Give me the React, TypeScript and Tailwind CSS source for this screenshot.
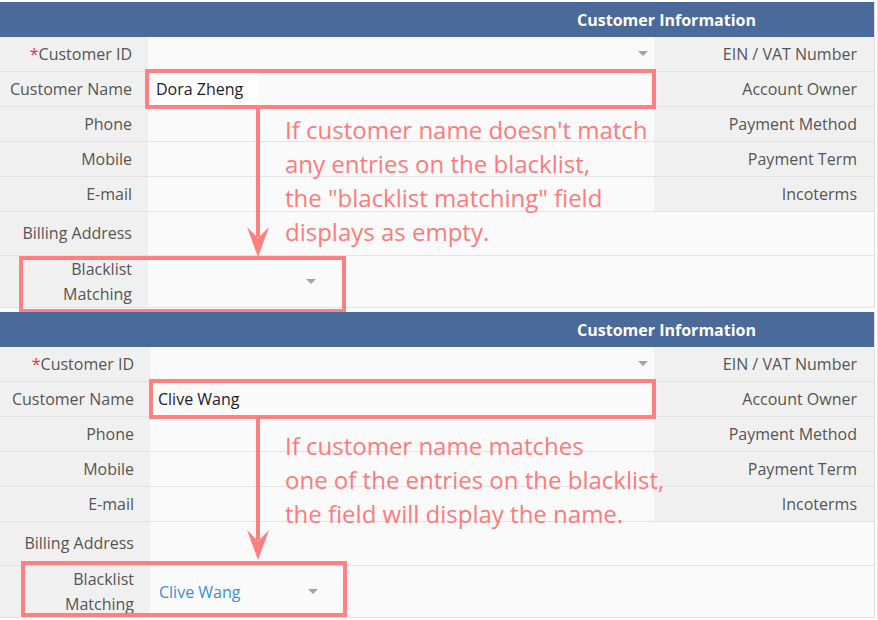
import type { ReactNode } from 'react';

const FONT = { fontFamily: '"Open Sans", "Noto Sans", sans-serif' };

function Caret() {
  return (
    <svg width="10" height="6" viewBox="0 0 10 6" className="shrink-0">
      <path d="M0 0 L10 0 L5 5 Z" fill="#a3a3a3" />
    </svg>
  );
}

function ArrowDown({ left, top, length }: { left: number; top: number; length: number }) {
  return (
    <svg
      className="absolute"
      style={{ left, top }}
      width="24"
      height={length}
      viewBox={`0 0 24 ${length}`}
    >
      <rect x="10" y="0" width="4" height={length - 20} fill="#ff7f7f" />
      <path d={`M12 ${length} L1 ${length - 30} L12 ${length - 19} L23 ${length - 30} Z`} fill="#ff7f7f" />
    </svg>
  );
}

function Row({
  label,
  right,
  labelW,
  children,
  tall,
}: {
  label: ReactNode;
  right?: string;
  labelW: number;
  children?: ReactNode;
  tall?: string;
}) {
  return (
    <div className={`flex border-b border-[#e3e3e3] ${tall ?? 'h-[35px]'}`}>
      <div
        className="flex shrink-0 items-center justify-end bg-[#f0f0f0] pr-4 text-right text-[16px] leading-[25px] text-[#555]"
        style={{ width: labelW }}
      >
        {label}
      </div>
      <div className="flex flex-1 items-center bg-[#fafafa]">{children}</div>
      {right && (
        <div className="flex w-[220px] shrink-0 items-center justify-end bg-[#f0f0f0] pr-[17px] text-[16px] text-[#555]">
          {right}
        </div>
      )}
    </div>
  );
}

function Panel({
  labelW,
  name,
  nameBg,
  matched,
  note,
  noteTop,
  boxes,
}: {
  labelW: number;
  name: string;
  nameBg?: boolean;
  matched?: string;
  note: string[];
  noteTop: number;
  boxes: { name: [number, number, number, number]; black: [number, number, number, number]; arrow: [number, number, number] };
}) {
  const [nl, nt, nw, nh] = boxes.name;
  const [bl, bt, bw, bh] = boxes.black;
  const [al, at, alen] = boxes.arrow;
  return (
    <div className="relative w-[875px] border-r border-[#e0e0e0]">
      <div className="flex h-[35px] items-center justify-end bg-[#4a6a9a] pr-[118px] text-[16px] font-bold text-white">
        Customer Information
      </div>
      <Row
        labelW={labelW}
        right="EIN / VAT Number"
        label={
          <span>
            <span className="text-[#ee3333]">*</span>Customer ID
          </span>
        }
      >
        <div className="flex flex-1 justify-end pr-[6px]">
          <Caret />
        </div>
      </Row>
      <Row labelW={labelW} label="Customer Name" right="Account Owner">
        <span className={`ml-[6px] px-[2px] py-[5px] text-[16px] text-[#1c1c2c] ${nameBg ? 'bg-white pr-[14px]' : ''}`}>
          {name}
        </span>
      </Row>
      <Row labelW={labelW} label="Phone" right="Payment Method" />
      <Row labelW={labelW} label="Mobile" right="Payment Term" />
      <Row labelW={labelW} label="E-mail" right="Incoterms" />
      <Row labelW={labelW} label="Billing Address" tall="h-[44px]" />
      <Row
        labelW={labelW}
        tall="h-[52px]"
        label={
          <span>
            Blacklist
            <br />
            Matching
          </span>
        }
      >
        <div className="flex w-[168px] items-center justify-between pl-[9px] text-[16px] text-[#3b8ed8]">
          <span>{matched ?? ''}</span>
          <Caret />
        </div>
      </Row>

      <div
        className="absolute border-[4px] border-[#ff8080]"
        style={{ left: nl, top: nt, width: nw, height: nh }}
      />
      <div
        className="absolute border-[4px] border-[#ff8080]"
        style={{ left: bl, top: bt, width: bw, height: bh }}
      />
      <ArrowDown left={al} top={at} length={alen} />
      <div className="absolute left-[285px] text-[24px] leading-[34px] text-[#ff7b7b]" style={{ top: noteTop }}>
        {note.map((l) => (
          <div key={l}>{l}</div>
        ))}
      </div>
    </div>
  );
}

export default function App() {
  return (
    <div className="h-[620px] w-[878px] overflow-hidden bg-[#e4e4e4]" style={FONT}>
      <div className="flex flex-col gap-[4px] bg-white pt-[2px] pb-[3px] w-[877px]">
        <Panel
          labelW={148}
          name="Dora Zheng"
          nameBg
          noteTop={111}
          note={[
            "If customer name doesn't match",
            'any entries on the blacklist,',
            'the "blacklist matching" field',
            'displays as empty.',
          ]}
          boxes={{ name: [145, 67, 511, 40], black: [19, 254, 327, 57], arrow: [246, 107, 148] }}
        />
        <Panel
          labelW={150}
          name="Clive Wang"
          matched="Clive Wang"
          noteTop={117}
          note={[
            'If customer name matches',
            'one of the entries on the blacklist,',
            'the field will display the name.',
          ]}
          boxes={{ name: [149, 67, 507, 40], black: [21, 249, 326, 56], arrow: [246, 107, 141] }}
        />
      </div>
    </div>
  );
}
